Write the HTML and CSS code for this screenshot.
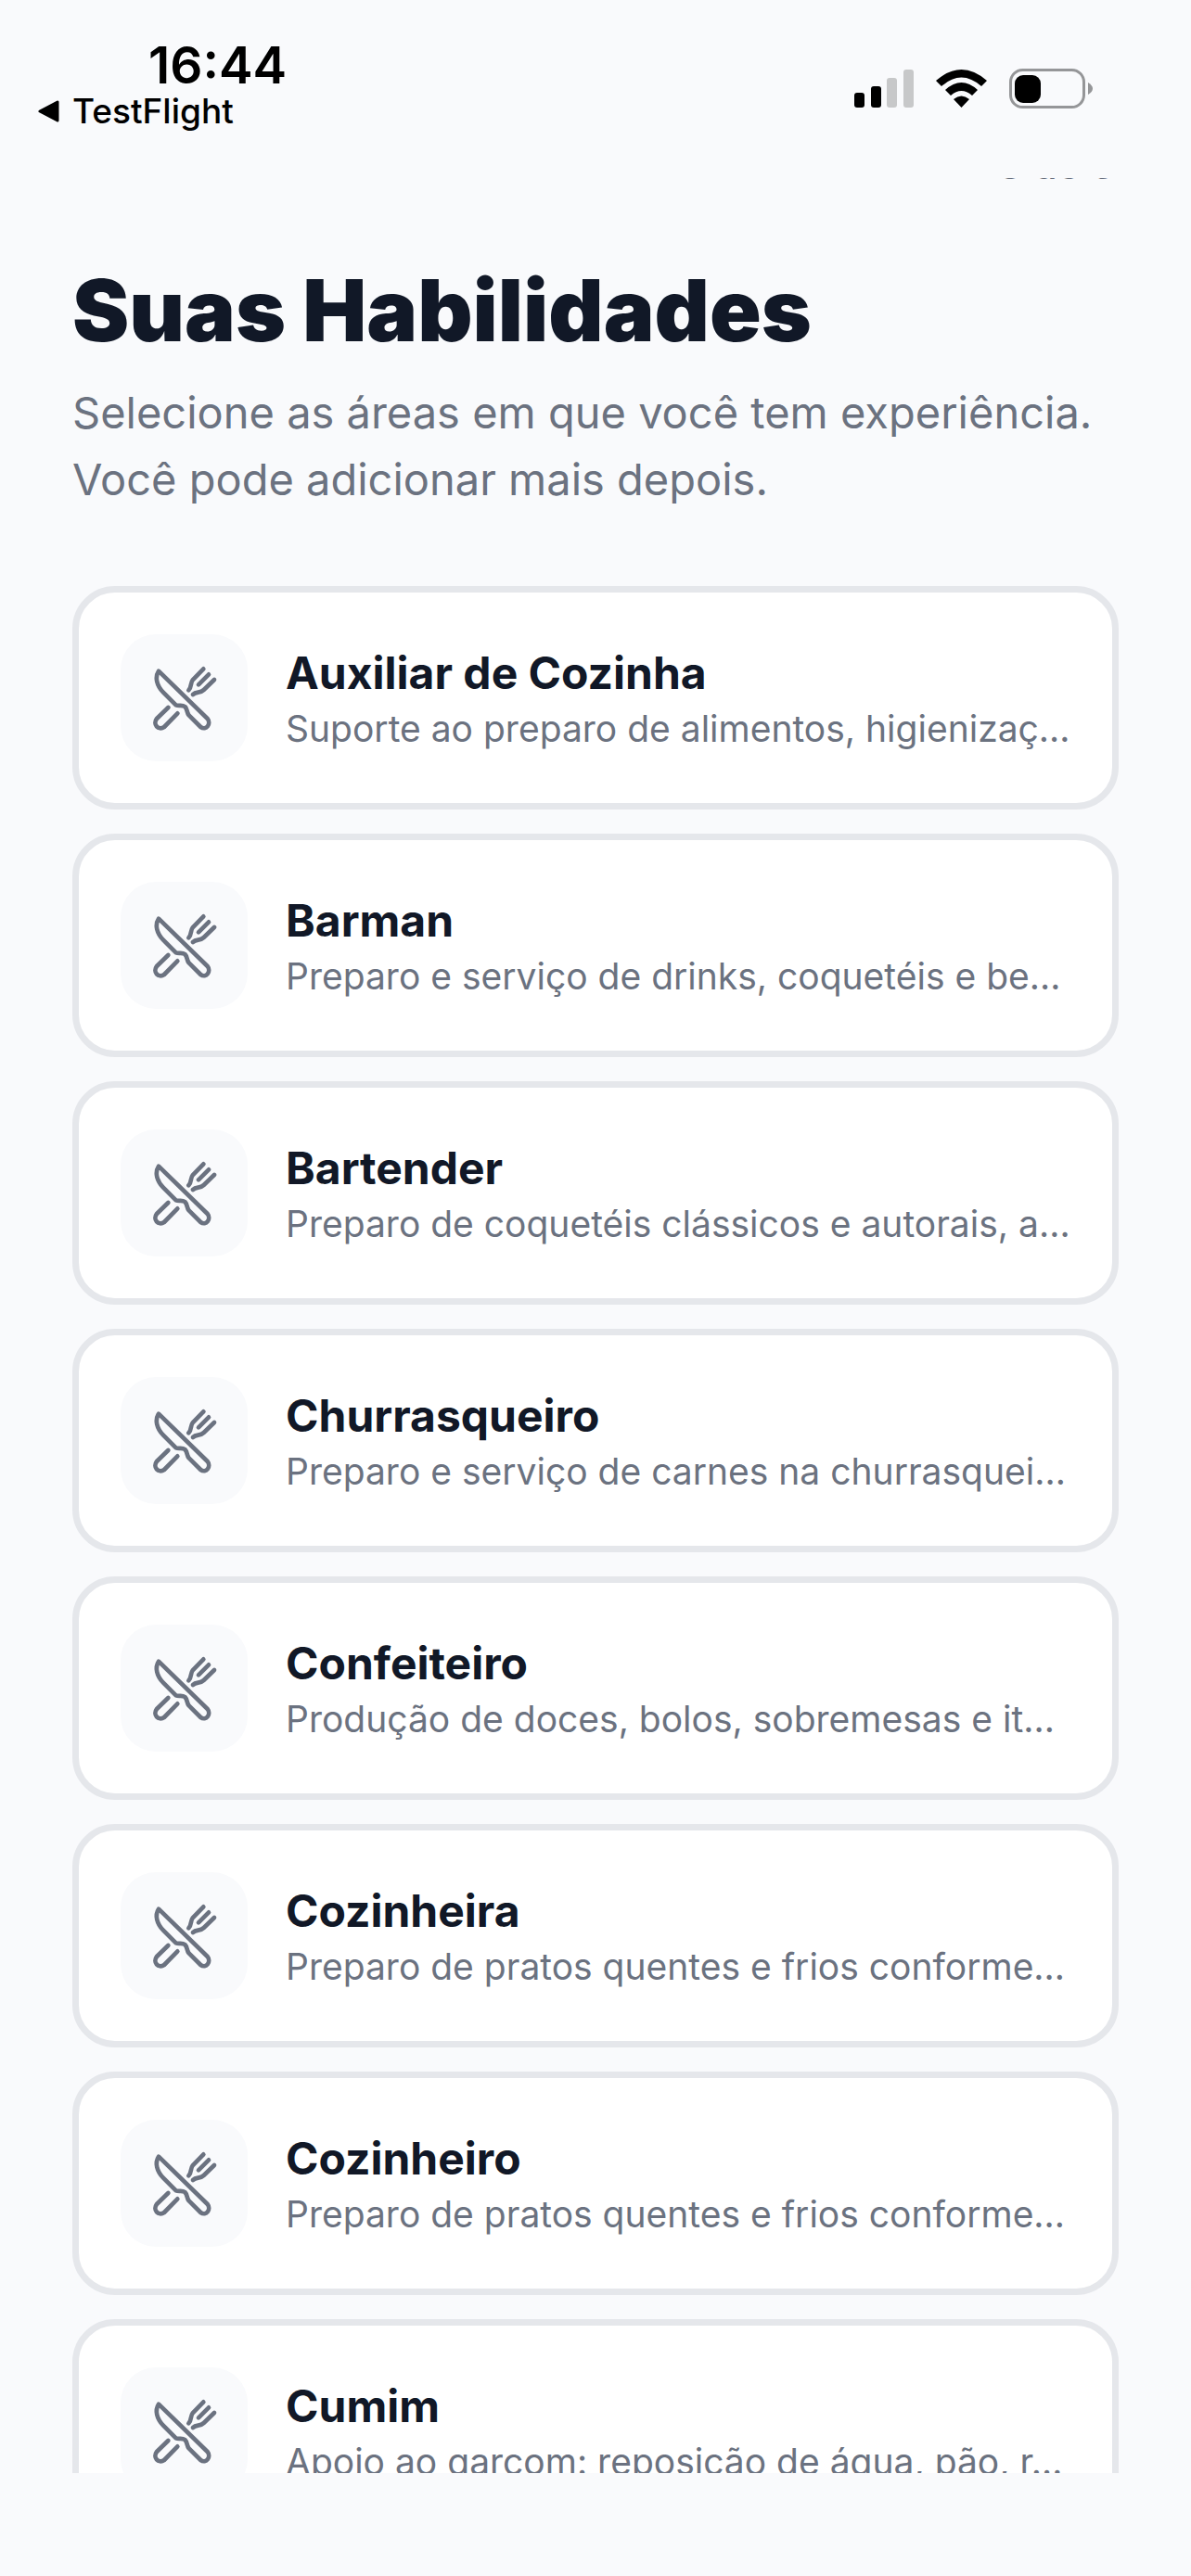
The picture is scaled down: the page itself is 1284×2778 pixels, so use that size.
FILE: index.html
```html
<!DOCTYPE html>
<html lang="pt-BR">
<head>
    <meta charset="UTF-8">
    <meta name="viewport" content="width=device-width, initial-scale=1.0">
    <title>Suas Habilidades</title>
    <link rel="stylesheet" href="styles.css">
</head>
<body>
    <svg class="sprite" aria-hidden="true">
        <symbol id="cutlery" viewBox="58 66 240 240">
            <path d="M94 98 L252 252 C265 268 248 292 230 279 L192 241 C184 232 188 222 179 213 C170 206 160 212 150 208 L109 167 C88 146 81 118 94 98 Z"/>
            <path d="M125 216 L88 252 C74 270 93 292 112 279 L155 235"/>
            <path d="M239 91 L204 127 C196 137 202 149 191 160"/>
            <path d="M256 109 L223 142"/>
            <path d="M274 126 L240 159 C228 171 216 163 205 174"/>
        </symbol>
    </svg>

    <header class="status-bar">
        <div class="status-left">
            <span class="clock">16:44</span>
            <a href="#" class="back-app">
                <svg class="back-arrow" viewBox="0 0 24 24"><path d="M2 12 L21 2 V22 Z"/></svg>
                TestFlight
            </a>
        </div>
        <div class="status-icons">
            <svg class="signal" viewBox="0 0 64 42">
                <rect x="0" y="25" width="11" height="16" rx="3"/>
                <rect x="18" y="18" width="11" height="23" rx="3"/>
                <rect class="off" x="35" y="9" width="11" height="32" rx="3"/>
                <rect class="off" x="53" y="0" width="11" height="41" rx="3"/>
            </svg>
            <svg class="wifi" viewBox="0 0 55 42">
                <path d="M0 12 Q27.500 -12 55 12 L49 18 Q27.500 -1 6 18 Z"/>
                <path d="M10 22 Q27.500 6 45 22 L39 28 Q27.500 18 16 28 Z"/>
                <path d="M19 32 Q27.500 25 36 32 L27.500 41 Z"/>
            </svg>
            <svg class="battery" viewBox="0 0 90 44">
                <rect class="battery-case" x="1.5" y="1.5" width="79" height="40" rx="13"/>
                <rect x="6" y="7" width="28" height="30" rx="9"/>
                <path class="battery-tip" d="M85 15 Q90 18 90 21.500 Q90 25 85 28 Z"/>
            </svg>
        </div>
    </header>

    <main class="scroller">
        <div class="step">3 de 6</div>

        <div class="intro">
            <h1>Suas Habilidades</h1>
            <p>Selecione as áreas em que você tem experiência. Você pode adicionar mais depois.</p>
        </div>

        <div class="skills">
            <button type="button" class="skill" aria-pressed="false">
                <span class="skill-icon"><svg><use href="#cutlery"/></svg></span>
                <span class="skill-text">
                    <span class="skill-name">Auxiliar de Cozinha</span>
                    <span class="skill-desc">Suporte ao preparo de alimentos, higienizaç…</span>
                </span>
            </button>
            <button type="button" class="skill" aria-pressed="false">
                <span class="skill-icon"><svg><use href="#cutlery"/></svg></span>
                <span class="skill-text">
                    <span class="skill-name">Barman</span>
                    <span class="skill-desc">Preparo e serviço de drinks, coquetéis e be…</span>
                </span>
            </button>
            <button type="button" class="skill" aria-pressed="false">
                <span class="skill-icon"><svg><use href="#cutlery"/></svg></span>
                <span class="skill-text">
                    <span class="skill-name">Bartender</span>
                    <span class="skill-desc">Preparo de coquetéis clássicos e autorais, a…</span>
                </span>
            </button>
            <button type="button" class="skill" aria-pressed="false">
                <span class="skill-icon"><svg><use href="#cutlery"/></svg></span>
                <span class="skill-text">
                    <span class="skill-name">Churrasqueiro</span>
                    <span class="skill-desc">Preparo e serviço de carnes na churrasquei…</span>
                </span>
            </button>
            <button type="button" class="skill" aria-pressed="false">
                <span class="skill-icon"><svg><use href="#cutlery"/></svg></span>
                <span class="skill-text">
                    <span class="skill-name">Confeiteiro</span>
                    <span class="skill-desc">Produção de doces, bolos, sobremesas e it…</span>
                </span>
            </button>
            <button type="button" class="skill" aria-pressed="false">
                <span class="skill-icon"><svg><use href="#cutlery"/></svg></span>
                <span class="skill-text">
                    <span class="skill-name">Cozinheira</span>
                    <span class="skill-desc">Preparo de pratos quentes e frios conforme…</span>
                </span>
            </button>
            <button type="button" class="skill" aria-pressed="false">
                <span class="skill-icon"><svg><use href="#cutlery"/></svg></span>
                <span class="skill-text">
                    <span class="skill-name">Cozinheiro</span>
                    <span class="skill-desc">Preparo de pratos quentes e frios conforme…</span>
                </span>
            </button>
            <button type="button" class="skill" aria-pressed="false">
                <span class="skill-icon"><svg><use href="#cutlery"/></svg></span>
                <span class="skill-text">
                    <span class="skill-name">Cumim</span>
                    <span class="skill-desc">Apoio ao garçom: reposição de água, pão, r…</span>
                </span>
            </button>
        </div>
    </main>
</body>
</html>
```

FILE: styles.css
```css
* {
    box-sizing: border-box;
}
body {
    margin: 0;
    height: 100vh;
    padding-bottom: 111px;
    display: flex;
    flex-direction: column;
    font-family: Inter, "Liberation Sans", sans-serif;
    background-color: #f9fafc;
    color: #111827;
}
.sprite {
    display: none;
}

/* Status bar */
.status-bar {
    flex: none;
    height: 192px;
    padding: 40px 106px 0 41px;
    display: flex;
    justify-content: space-between;
    align-items: flex-start;
    color: #000;
}
.status-left {
    display: flex;
    flex-direction: column;
}
.clock {
    padding-left: 119px;
    font-size: 55px;
    line-height: 60px;
    font-weight: 600;
}
.back-app {
    display: flex;
    align-items: center;
    gap: 13px;
    font-size: 37px;
    line-height: 40px;
    font-weight: 500;
    color: #000;
    text-decoration: none;
}
.back-arrow {
    width: 24px;
    height: 24px;
    stroke: #000;
    stroke-width: 3;
    stroke-linejoin: round;
}
.status-icons {
    display: flex;
    align-items: center;
    gap: 24px;
    padding-top: 34px;
}
.signal {
    width: 64px;
    height: 42px;
}
.signal .off {
    fill: #c7c8c9;
}
.wifi {
    width: 55px;
    height: 42px;
}
.battery {
    width: 90px;
    height: 44px;
}
.battery-case {
    fill: none;
    stroke: #959698;
    stroke-width: 3;
}
.battery-tip {
    fill: #959698;
}

/* Scrolling content */
.scroller {
    flex: 1;
    min-height: 0;
    overflow: hidden;
    padding: 0 78px;
}
/* Step counter is scrolled up under the status bar */
.step {
    margin-top: -39px;
    padding-right: 4px;
    font-size: 42px;
    line-height: 50px;
    font-weight: 500;
    text-align: right;
    color: #6b7280;
}
.intro {
    padding-top: 78px;
}
h1 {
    margin: 0;
    font-size: 92px;
    line-height: 108px;
    font-weight: 900;
}
.intro p {
    margin: 20px 0 0;
    font-size: 47px;
    line-height: 72px;
    color: #6b7280;
}
.skills {
    margin-top: 79px;
    display: flex;
    flex-direction: column;
    gap: 26px;
}
.skill {
    width: 100%;
    padding: 45px;
    display: flex;
    align-items: center;
    gap: 41px;
    font-family: inherit;
    text-align: left;
    background-color: #fff;
    border: 7px solid #e5e7eb;
    border-radius: 46px;
    cursor: pointer;
}
.skill-icon {
    flex: none;
    width: 137px;
    height: 137px;
    display: flex;
    align-items: center;
    justify-content: center;
    border-radius: 38px;
    background-color: #f9fafc;
}
.skill-icon svg {
    width: 80px;
    height: 80px;
    fill: none;
    stroke: #6b7280;
    stroke-width: 14;
    stroke-linecap: round;
    stroke-linejoin: round;
}
.skill-text {
    flex: 1;
    min-width: 0;
    padding-top: 4px;
    display: flex;
    flex-direction: column;
    gap: 6px;
}
.skill-name {
    font-size: 48px;
    line-height: 56px;
    font-weight: 700;
    color: #111827;
}
.skill-desc {
    font-size: 39px;
    line-height: 52px;
    white-space: nowrap;
    color: #6b7280;
}
```
